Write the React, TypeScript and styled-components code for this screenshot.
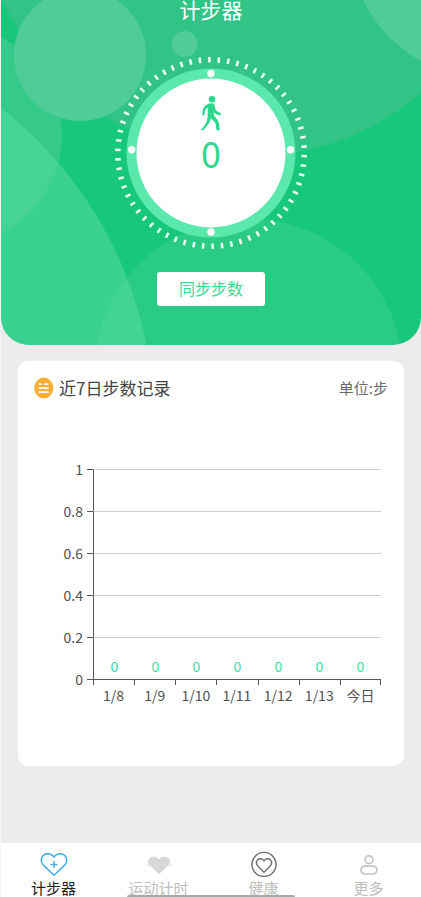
import React from "react";
import styled, { createGlobalStyle } from "styled-components";

const GlobalStyle = createGlobalStyle`
  * { box-sizing: border-box; }
  body {
    margin: 0;
    background: #ececec;
    font-family: "Noto Sans CJK SC", "Noto Sans", sans-serif;
  }
  button { font-family: inherit; cursor: pointer; }
`;

const Page = styled.div`
  display: flex;
  flex-direction: column;
  min-height: 100vh;
  border-left: 1px solid #f4f4f4;
  background: #ececec;
`;

const Hero = styled.header`
  position: relative;
  display: flex;
  flex-direction: column;
  align-items: center;
  padding-bottom: 39px;
  border-radius: 0 0 28px 28px;
  overflow: hidden;
  background: #17c77b;
`;

const Backdrop = styled.svg`
  position: absolute;
  inset: 0;
  width: 100%;
  height: 100%;
`;

const Title = styled.h1`
  position: relative;
  margin: 0;
  font-size: 21px;
  line-height: 18px;
  font-weight: 400;
  color: #fff;
`;

const Dial = styled.div`
  position: relative;
  display: flex;
  flex-direction: column;
  align-items: center;
  width: 194px;
  height: 194px;
  margin: 38px 0 22px;
  padding-top: 39px;
`;

const DialFace = styled.svg`
  position: absolute;
  inset: 0;
`;

const Walker = styled.svg`
  position: relative;
  display: block;
`;

const Steps = styled.strong`
  position: relative;
  font-size: 36px;
  line-height: 42px;
  font-weight: 400;
  color: #2fd68e;
`;

const SyncButton = styled.button`
  position: relative;
  height: 34px;
  padding: 0 22px 2px;
  border: 0;
  border-radius: 3px;
  background: #fff;
  color: #3bd794;
  font-size: 16px;
  line-height: 32px;
`;

const Main = styled.main`
  flex: 1;
  padding: 16px 17px;
`;

const Card = styled.section`
  padding: 16px 16px 45px;
  border-radius: 10px;
  background: #fff;
`;

const CardHead = styled.div`
  display: flex;
  align-items: center;
  gap: 5px;
`;

const CardTitle = styled.h2`
  flex: 1;
  margin: 0;
  font-size: 17px;
  line-height: 22px;
  font-weight: 400;
  color: #444;
`;

const Unit = styled.span`
  font-size: 15px;
  line-height: 20px;
  color: #6a6a6a;
`;

const Chart = styled.div`
  margin: 70px 7px 0 20px;
  font-size: 14px;
  line-height: 20px;
  color: #505050;
`;

const Band = styled.div`
  display: grid;
  grid-template-columns: 29px 10px 1fr;
  height: 42px;
`;

const YLabel = styled.span`
  margin-top: -10px;
  text-align: right;
`;

const YTick = styled.span`
  height: 1px;
  margin-left: 4px;
  background: #555;
`;

const Plot = styled.div`
  display: grid;
  grid-template-columns: repeat(7, 1fr);
  align-items: end;
  border-left: 1px solid #555;
  border-top: 1px solid #ccc;
`;

const Value = styled.span`
  padding-bottom: 3px;
  text-align: center;
  color: #37e0a4;
`;

const AxisCells = styled.div`
  display: grid;
  grid-template-columns: repeat(7, 1fr);
`;

const AxisCell = styled.div`
  border-top: 1px solid #555;
  text-align: center;
  white-space: nowrap;

  &::before {
    content: "";
    display: block;
    height: 5px;
    border-left: 1px solid #555;
  }

  &:last-child::before {
    border-right: 1px solid #555;
  }
`;

const Nav = styled.nav`
  position: relative;
  display: grid;
  grid-template-columns: repeat(4, 1fr);
  padding: 8px 0 1px;
  background: #fff;
`;

const Tab = styled.button<{ $active?: boolean }>`
  display: flex;
  flex-direction: column;
  align-items: center;
  gap: 3px;
  padding: 0;
  border: 0;
  background: none;
  color: ${(p) => (p.$active ? "#222" : "#bdbdbd")};
  font-size: 15px;
  line-height: 16px;
`;

const TabIcon = styled.svg`
  display: block;
  fill: none;
`;

const HomeIndicator = styled.div`
  position: absolute;
  left: 30%;
  right: 30%;
  bottom: 0;
  height: 2px;
  border-radius: 2px 2px 0 0;
  background: #a9a9a9;
`;

const TICKS = 62;
const ticks = Array.from({ length: TICKS }, (_, i) => (i * 360) / TICKS - 1);
const levels = ["1", "0.8", "0.6", "0.4", "0.2"];
const days = [
  { day: "1/8", steps: 0 },
  { day: "1/9", steps: 0 },
  { day: "1/10", steps: 0 },
  { day: "1/11", steps: 0 },
  { day: "1/12", steps: 0 },
  { day: "1/13", steps: 0 },
  { day: "今日", steps: 0 },
];

const Bubbles = () => (
  <Backdrop viewBox="1 0 420 345" preserveAspectRatio="xMidYMin slice" aria-hidden="true">
    <circle cx="247" cy="-112" r="269" fill="#60c09a" fillOpacity=".36" />
    <circle cx="-47" cy="135" r="109" fill="#6ccfa4" fillOpacity=".36" />
    <circle cx="-245" cy="422" r="399" fill="#5ddba6" fillOpacity=".48" />
    <circle cx="248.5" cy="373" r="154.5" fill="#60dea4" fillOpacity=".26" />
    <circle cx="80" cy="55" r="66" fill="#50cc98" />
    <circle cx="184.5" cy="44" r="13" fill="#50cc98" />
    <circle cx="485" cy="-58" r="135" fill="#50cc98" />
  </Backdrop>
);

const Face = () => (
  <DialFace width="194" height="194" viewBox="-97 -97 194 194" aria-hidden="true">
    {ticks.map((a) => (
      <line
        key={a}
        y1="-96"
        y2="-90.5"
        stroke="#effff7"
        strokeWidth="2.5"
        transform={`rotate(${a})`}
      />
    ))}
    <circle r="84.5" fill="#5ae8ac" />
    <circle r="74.5" fill="#fff" />
    <circle cy="-79.5" r="3.7" fill="#fff" />
    <circle cy="79" r="3.7" fill="#fff" />
    <circle cx="-79.3" cy="-3.3" r="3.7" fill="#fff" />
    <circle cx="79.5" cy="-3.3" r="3.7" fill="#fff" />
  </DialFace>
);

const WalkerIcon = () => (
  <Walker width="22" height="36" viewBox="0 0 22 36" aria-hidden="true">
    <circle cx="12" cy="4.2" r="3.3" fill="#2fd68e" />
    <path
      d="M7.6 9.2 Q10.5 7.6 13.3 8.6 Q14.7 9.4 15 12.4 Q15.4 15.6 17.3 16.6 L21 18.2 L20.3 20.4 L16.4 19.2 Q14.6 18.4 13.9 17.2 L13.8 20.3 L17.8 25.2 Q19 27 19 29 L19.8 35.3 L16.4 35.3 L15.7 29.3 Q15.3 27.5 14 26.3 L10.9 23.5 Q10.2 27 7.7 30 L3.5 35.3 L.5 35.3 Q5.6 30 6.8 26 Q7.9 22 7.7 18 L7.8 12.4 Q5.4 13.5 5 16 L4.3 20.6 L2.2 20.2 L2.7 15.5 Q3.1 11.6 7.6 9.2Z"
      fill="#2fd68e"
    />
  </Walker>
);

const RecordIcon = () => (
  <svg width="20" height="22" viewBox="0 0 20 22" aria-hidden="true">
    <ellipse cx="9.8" cy="11" rx="9.6" ry="10.4" fill="#fdae33" />
    <g stroke="#fff" strokeWidth="1.7" strokeLinecap="round">
      <path d="M5.4 7.2h1.6M10.6 7.2h3.2M5.4 11.1h8.6M5.4 15.2h8.6" />
    </g>
  </svg>
);

const StepsIcon = () => (
  <TabIcon width="28" height="26" viewBox="0 0 28 26" stroke="#42aee3" strokeWidth="1.5" aria-hidden="true">
    <path
      d="M14 24.2 L3.6 14.4 C1.2 12 .8 8.6 2.2 5.9 C4.2 2.2 10.5 1.2 14 6 C17.5 1.2 23.8 2.2 25.8 5.9 C27.2 8.6 26.8 12 24.4 14.4Z"
      strokeLinejoin="round"
    />
    <path d="M14 10v7M10.5 13.5h7" />
  </TabIcon>
);

const TimerIcon = () => (
  <TabIcon width="28" height="26" viewBox="0 0 28 26" aria-hidden="true">
    <path
      d="M14 23.2 L4.8 14.6 C2.3 12 2.6 8.4 5 6.6 C7.8 4.6 11.8 5.2 14 8.4 C16.2 5.2 20.2 4.6 23 6.6 C25.4 8.4 25.7 12 23.2 14.6Z"
      fill="#d8d8d8"
    />
    <path d="M1 14.2h26" stroke="#dcdcdc" strokeWidth="1" />
  </TabIcon>
);

const HealthIcon = () => (
  <TabIcon width="28" height="26" viewBox="0 0 28 26" stroke="#6e6e6e" strokeWidth="1.4" aria-hidden="true">
    <circle cx="14" cy="13.4" r="12" />
    <path
      d="M14 21.2 L8 15.2 C6.2 13.2 6 10.6 7.5 8.9 C9.3 7 12.4 7.3 14 10 C15.6 7.3 18.7 7 20.5 8.9 C22 10.6 21.8 13.2 20 15.2Z"
      strokeLinejoin="round"
    />
  </TabIcon>
);

const MoreIcon = () => (
  <TabIcon width="28" height="26" viewBox="0 0 28 26" stroke="#c4c4c4" strokeWidth="1.7" aria-hidden="true">
    <circle cx="14" cy="8.7" r="3.9" />
    <rect x="6" y="15.2" width="16" height="7.8" rx="3.9" />
  </TabIcon>
);

export default function App() {
  return (
    <>
      <GlobalStyle />
      <Page>
        <Hero>
          <Bubbles />
          <Title>计步器</Title>
          <Dial>
            <Face />
            <WalkerIcon />
            <Steps>0</Steps>
          </Dial>
          <SyncButton type="button">同步步数</SyncButton>
        </Hero>
        <Main>
          <Card>
            <CardHead>
              <RecordIcon />
              <CardTitle>近7日步数记录</CardTitle>
              <Unit>单位:步</Unit>
            </CardHead>
            <Chart>
              {levels.map((level, i) => (
                <Band key={level}>
                  <YLabel>{level}</YLabel>
                  <YTick />
                  <Plot>
                    {i === levels.length - 1 &&
                      days.map((d) => <Value key={d.day}>{d.steps}</Value>)}
                  </Plot>
                </Band>
              ))}
              <Band>
                <YLabel>0</YLabel>
                <YTick />
                <AxisCells>
                  {days.map((d) => (
                    <AxisCell key={d.day}>{d.day}</AxisCell>
                  ))}
                </AxisCells>
              </Band>
            </Chart>
          </Card>
        </Main>
        <Nav>
          <Tab type="button" $active aria-current="page">
            <StepsIcon />
            计步器
          </Tab>
          <Tab type="button">
            <TimerIcon />
            运动计时
          </Tab>
          <Tab type="button">
            <HealthIcon />
            健康
          </Tab>
          <Tab type="button">
            <MoreIcon />
            更多
          </Tab>
          <HomeIndicator />
        </Nav>
      </Page>
    </>
  );
}
